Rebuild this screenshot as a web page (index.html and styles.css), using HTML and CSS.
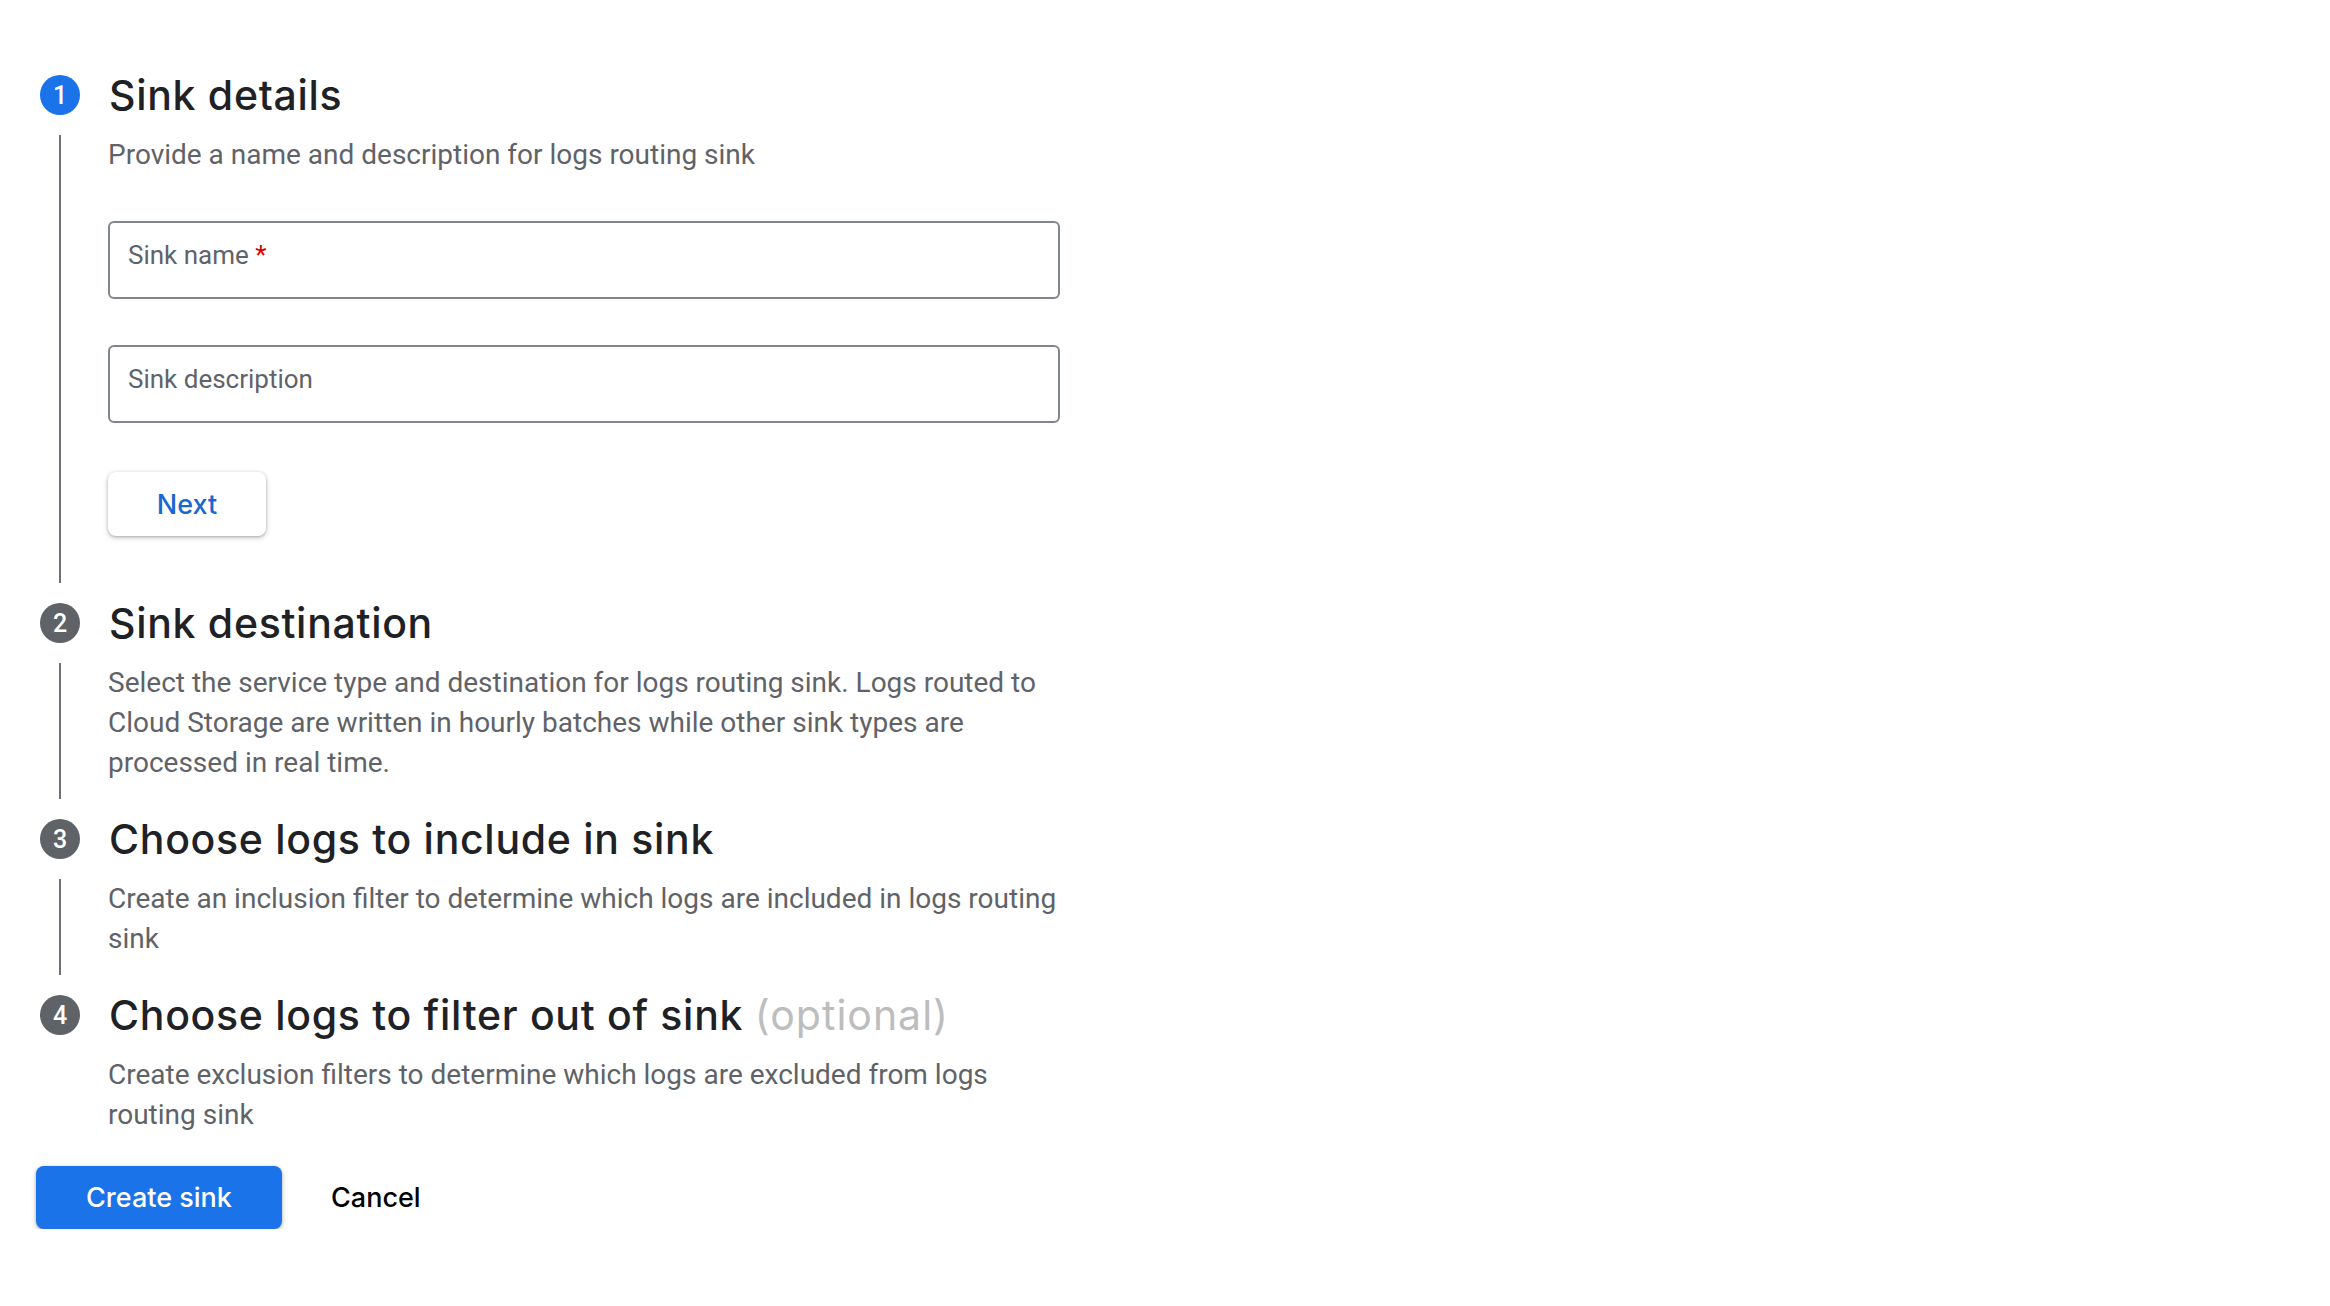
FILE: index.html
```html
<!DOCTYPE html>
<html lang="en">
<head>
<meta charset="utf-8">
<title>Create logs routing sink</title>
<link rel="stylesheet" href="styles.css">
</head>
<body>
<main class="stepper">
  <section class="step">
    <div class="step-head">
      <span class="step-num active">1</span>
      <h2 class="step-title">Sink details</h2>
    </div>
    <div class="step-body">
      <p class="step-desc">Provide a name and description for logs routing sink</p>
      <div class="field field-first"><span class="field-label">Sink name <span class="req">*</span></span></div>
      <div class="field"><span class="field-label">Sink description</span></div>
      <button class="btn-next" type="button">Next</button>
    </div>
  </section>
  <section class="step">
    <div class="step-head">
      <span class="step-num">2</span>
      <h2 class="step-title">Sink destination</h2>
    </div>
    <div class="step-body step-body-text">
      <p class="step-desc">Select the service type and destination for logs routing sink. Logs routed to Cloud Storage are written in hourly batches while other sink types are processed in real time.</p>
    </div>
  </section>
  <section class="step">
    <div class="step-head">
      <span class="step-num">3</span>
      <h2 class="step-title">Choose logs to include in sink</h2>
    </div>
    <div class="step-body step-body-text">
      <p class="step-desc">Create an inclusion filter to determine which logs are included in logs routing sink</p>
    </div>
  </section>
  <section class="step">
    <div class="step-head">
      <span class="step-num">4</span>
      <h2 class="step-title">Choose logs to filter out of sink <span class="optional">(optional)</span></h2>
    </div>
    <div class="step-body step-body-last">
      <p class="step-desc">Create exclusion filters to determine which logs are excluded from logs routing sink</p>
    </div>
  </section>
  <div class="actions">
    <button class="btn-primary" type="button">Create sink</button>
    <button class="btn-text" type="button">Cancel</button>
  </div>
</main>
</body>
</html>
```
FILE: styles.css
```css
html, body {
  margin: 0;
  padding: 0;
  background: #ffffff;
}

body {
  font-family: Roboto, "Liberation Sans", Arial, sans-serif;
  color: #202124;
}

.stepper {
  padding-top: 75px;
  width: 1100px;
}

.step-head {
  display: flex;
  align-items: center;
  height: 40px;
  margin-left: 40px;
  gap: 29px;
}

.step-num {
  flex: 0 0 40px;
  width: 40px;
  height: 40px;
  border-radius: 50%;
  background: #5f6368;
  color: #ffffff;
  display: flex;
  align-items: center;
  justify-content: center;
  font-family: Roboto, "Liberation Sans", sans-serif;
  font-size: 25px;
  font-weight: 500;
}

.step-num.active {
  background: #1a73e8;
}

.step-title {
  margin: 0;
  font-family: Inter, "Open Sans", sans-serif;
  font-size: 41px;
  font-weight: 500;
  color: #202124;
  white-space: nowrap;
  letter-spacing: 0.7px;
}

.optional {
  color: #bdbdbd;
  font-weight: 400;
  letter-spacing: 1px;
}

.step-body {
  margin: 20px 0 20px 59px;
  border-left: 2px solid #6f7377;
  padding: 0 0 47px 47px;
  width: 952px;
}

.step-body-text {
  padding-bottom: 16px;
}

.step-body-last {
  border-left-color: transparent;
  padding-bottom: 0;
  margin-bottom: 31px;
}

.step-desc {
  margin: 0 -14px 0 0;
  font-size: 28px;
  line-height: 40px;
  color: #5f6368;
}

.field {
  box-sizing: border-box;
  height: 78px;
  margin-top: 46px;
  border: 2px solid #80868b;
  border-radius: 6px;
  padding: 17px 0 0 18px;
}

.field-label {
  font-size: 26px;
  line-height: 30px;
  color: #5f6368;
}

.req {
  color: #d50000;
}

.btn-next {
  display: block;
  margin-top: 49px;
  width: 158px;
  height: 64px;
  border: none;
  border-radius: 8px;
  background: #ffffff;
  color: #1967d2;
  font-family: Inter, "Open Sans", sans-serif;
  font-size: 27px;
  font-weight: 500;
  box-shadow: 0 1px 3px rgba(60, 64, 67, 0.35), 0 2px 5px 1px rgba(60, 64, 67, 0.15);
  cursor: pointer;
}

.actions {
  display: flex;
  align-items: center;
  gap: 25px;
  margin-left: 36px;
}

.btn-primary {
  height: 63px;
  width: 246px;
  border: none;
  border-radius: 8px;
  background: #1a73e8;
  color: #ffffff;
  font-family: Inter, "Open Sans", sans-serif;
  font-size: 27px;
  font-weight: 500;
  box-shadow: 0 1px 3px rgba(60, 64, 67, 0.35), 0 2px 5px 1px rgba(60, 64, 67, 0.15);
  cursor: pointer;
}

.btn-text {
  height: 63px;
  padding: 0 24px;
  border: none;
  background: transparent;
  color: #000000;
  font-family: Inter, "Open Sans", sans-serif;
  font-size: 27px;
  font-weight: 500;
  cursor: pointer;
}
```
